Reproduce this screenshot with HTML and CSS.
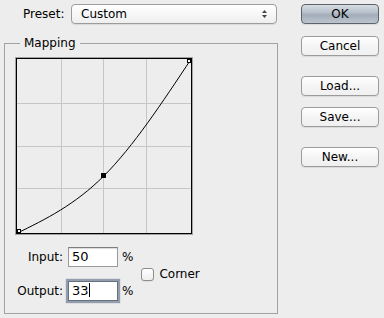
FILE: index.html
```html
<!DOCTYPE html>
<html lang="en">
<head>
  <meta charset="UTF-8" />
  <title>Curves</title>
  <link rel="stylesheet" href="styles.css">
</head>
<body>
  <div class="dialog">
    <div class="main">
      <div class="preset-row">
        <span class="preset-label">Preset:</span>
        <div class="select">
          <span>Custom</span>
          <svg class="arrows" width="7" height="10" viewBox="0 0 7 10">
            <path d="M3.5 1 L6 4 L1 4 Z" fill="#444"/>
            <path d="M3.5 9 L6 6 L1 6 Z" fill="#444"/>
          </svg>
        </div>
      </div>

      <fieldset class="mapping">
        <legend>Mapping</legend>
        <svg class="graph" width="178" height="178" viewBox="0 0 178 178">
          <rect x="0.5" y="0.5" width="177" height="177" fill="none" stroke="#a3a3a3"/>
          <g stroke="#c6c6c6" shape-rendering="crispEdges">
            <line x1="46.5" y1="2" x2="46.5" y2="176"/>
            <line x1="88.5" y1="2" x2="88.5" y2="176"/>
            <line x1="131.5" y1="2" x2="131.5" y2="176"/>
            <line x1="2" y1="46.5" x2="176" y2="46.5"/>
            <line x1="2" y1="89.5" x2="176" y2="89.5"/>
            <line x1="2" y1="131.5" x2="176" y2="131.5"/>
          </g>
          <rect x="1.5" y="1.5" width="175" height="175" fill="none" stroke="#000" shape-rendering="crispEdges"/>
          <!-- curve through (0,0) (50,33) (100,100) -->
          <path d="M1.5 176.5 C30.7 162.2 59.8 147.9 89 118.8 C118.2 89.6 147.3 45.5 176.5 1.5" fill="none" stroke="#000" stroke-width="1"/>
          <rect x="2.5" y="172.5" width="3" height="3" fill="#fff" stroke="#000" shape-rendering="crispEdges"/>
          <rect x="172.5" y="2.5" width="3" height="3" fill="#fff" stroke="#000" shape-rendering="crispEdges"/>
          <rect x="86" y="116" width="5" height="5" fill="#000" shape-rendering="crispEdges"/>
        </svg>

        <div class="values">
          <div class="fields">
            <span class="field-label">Input:</span>
            <div class="field">50</div>
            <span class="unit">%</span>
            <span class="field-label">Output:</span>
            <div class="field focused">33<span class="caret"></span></div>
            <span class="unit">%</span>
          </div>
          <label class="corner"><span class="checkbox"></span>Corner</label>
        </div>
      </fieldset>
    </div>

    <div class="buttons">
      <button class="btn default">OK</button>
      <button class="btn cancel">Cancel</button>
      <button class="btn load">Load...</button>
      <button class="btn save">Save...</button>
      <button class="btn new">New...</button>
    </div>
  </div>
</body>
</html>
```

FILE: styles.css
```css
html, body {
  margin: 0;
  background: #ededed;
}
body {
  font-family: "DejaVu Sans", sans-serif;
  font-size: 12px;
  color: #000;
}
.dialog {
  display: flex;
  width: 384px;
  height: 318px;
}
.main {
  margin-left: 4px;
  width: 274px;
}
.preset-row {
  display: flex;
  align-items: center;
  margin-top: 4px;
  height: 20px;
}
.preset-label {
  margin-left: 19px;
  width: 48px;
}
.select {
  box-sizing: border-box;
  display: flex;
  align-items: center;
  justify-content: space-between;
  width: 206px;
  height: 20px;
  padding: 0 8px 0 9px;
  border: 1px solid #9c9c9c;
  border-radius: 4px;
  background: linear-gradient(#ffffff, #f6f6f6 55%, #efefef);
  box-shadow: 0 1px 0 rgba(0,0,0,0.08);
}
.arrows {
  display: block;
}
.mapping {
  box-sizing: border-box;
  width: 274px;
  margin: 12px 0 0 0;
  padding: 7px 0 12px 10px;
  border: 1px solid #a2a2a2;
  min-width: 0;
}
.mapping legend {
  margin-left: 5px;
  padding: 0 4px;
  line-height: 14px;
}
.graph {
  display: block;
}
.values {
  display: flex;
  align-items: center;
  margin-top: 12px;
}
.fields {
  display: grid;
  grid-template-columns: 48px 50px auto;
  column-gap: 5px;
  row-gap: 14px;
  align-items: center;
}
.field-label {
  text-align: right;
}
.field {
  box-sizing: border-box;
  height: 20px;
  padding: 0 3px;
  line-height: 18px;
  font-size: 13px;
  border: 1px solid #9a9a9a;
  border-top-color: #7d7d7d;
  background: #fff;
  box-shadow: inset 0 1px 1px rgba(0,0,0,0.15);
}
.field.focused {
  border-color: #66717f;
  box-shadow: 0 0 1px 2px rgba(136,148,166,0.9);
}
.caret {
  display: inline-block;
  width: 1px;
  height: 14px;
  background: #000;
  vertical-align: -2px;
}
.unit {
  margin-left: -1px;
}
.corner {
  display: flex;
  align-items: center;
  margin-left: 8px;
}
.checkbox {
  box-sizing: border-box;
  width: 13px;
  height: 13px;
  margin-right: 5px;
  border: 1px solid #8d8d8d;
  border-radius: 3px;
  background: linear-gradient(#ffffff, #eeeeee);
  box-shadow: 0 1px 0 rgba(0,0,0,0.06);
}
.buttons {
  display: flex;
  flex-direction: column;
  margin-left: auto;
  margin-right: 5px;
  width: 78px;
}
.btn {
  box-sizing: border-box;
  height: 20px;
  padding: 0;
  font-family: "DejaVu Sans", sans-serif;
  font-size: 12px;
  color: #000;
  border: 1px solid #9b9b9b;
  border-radius: 4px;
  background: linear-gradient(#ffffff, #f4f4f4 55%, #f0f0f0);
  box-shadow: 0 1px 0 rgba(0,0,0,0.08);
}
.btn.default {
  margin-top: 4px;
  border-color: #5e636b;
  background: linear-gradient(#d7dde4, #b4bdc8 45%, #a3adba 55%, #bcc4ce);
}
.btn.cancel {
  margin-top: 12px;
}
.btn.load {
  margin-top: 20px;
}
.btn.save {
  margin-top: 11px;
}
.btn.new {
  margin-top: 20px;
}
```
